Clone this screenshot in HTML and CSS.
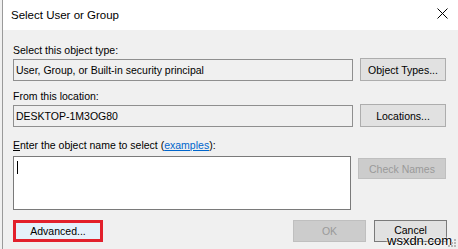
FILE: index.html
```html
<!DOCTYPE html>
<html>
<head>
<meta charset="utf-8">
<link rel="stylesheet" href="styles.css">
</head>
<body>
<div class="window">
  <div class="titlebar">
    <span class="title">Select User or Group</span>
    <svg class="close" width="11" height="11" viewBox="0 0 11 11"><path d="M0.5 0.5 L10.5 10.5 M10.5 0.5 L0.5 10.5" stroke="#000" stroke-width="1" fill="none"/></svg>
  </div>
  <div class="content">
    <div class="label l1">Select this object type:</div>
    <div class="row">
      <div class="field">User, Group, or Built-in security principal</div>
      <div class="btn">Object Types...</div>
    </div>
    <div class="label l2">From this location:</div>
    <div class="row">
      <div class="field">DESKTOP-1M3OG80</div>
      <div class="btn">Locations...</div>
    </div>
    <div class="label l3"><u>E</u>nter the object name to select (<a class="link">examples</a>):</div>
    <div class="row top">
      <div class="textarea"><span class="caret"></span></div>
      <div class="btn disabled check">Check Names</div>
    </div>
    <div class="bottom">
      <div class="btn advanced">Advanced...</div>
      <div class="spacer"></div>
      <div class="btn disabled ok">OK</div>
      <div class="btn cancel"><span class="cancel-text">Cancel</span></div>
    </div>
  </div>
  <div class="watermark">wsxdn.com</div>
  <svg class="grip" width="9" height="9" viewBox="0 0 9 9">
    <rect x="6" y="0" width="2" height="2" fill="#b8b8b8"/>
    <rect x="3" y="3" width="2" height="2" fill="#b8b8b8"/>
    <rect x="6" y="3" width="2" height="2" fill="#b8b8b8"/>
    <rect x="0" y="6" width="2" height="2" fill="#b8b8b8"/>
    <rect x="3" y="6" width="2" height="2" fill="#b8b8b8"/>
    <rect x="6" y="6" width="2" height="2" fill="#b8b8b8"/>
  </svg>
</div>
</body>
</html>
```
FILE: styles.css
```css
* { box-sizing: border-box; }
html, body {
  margin: 0;
  padding: 0;
  width: 458px;
  height: 249px;
  overflow: hidden;
  background: #f0f0f0;
  font-family: "Liberation Sans", Arial, sans-serif;
  font-size: 10.5px;
  color: #000;
}
.window {
  position: relative;
  margin-left: 2px;
  width: 456px;
  height: 249px;
  border-left: 1px solid #9a9a9a;
  background: #f0f0f0;
}
.titlebar {
  height: 30px;
  background: #fff;
  display: flex;
  align-items: center;
  justify-content: space-between;
  padding-left: 8px;
  padding-right: 10px;
}
.title {
  font-size: 11.5px;
  margin-top: -1px;
}
.close {
  display: block;
  margin-top: -4px;
}
.content {
  padding: 13px 12px 0 10px;
}
.label {
  height: 14px;
  line-height: 14px;
  white-space: nowrap;
}
.l1 { margin-bottom: 1px; }
.l2 { margin-top: 8px; margin-bottom: 1px; }
.l3 { margin-top: 11px; margin-bottom: 4px; }
.link {
  color: #0066cc;
  text-decoration: underline;
}
.row {
  display: flex;
  align-items: center;
  gap: 7px;
}
.row.top { align-items: flex-start; }
.field {
  flex: 1;
  height: 22px;
  line-height: 20px;
  border: 1px solid #8f8f8f;
  background: #f0f0f0;
  padding-left: 2px;
  white-space: nowrap;
  overflow: hidden;
}
.textarea {
  flex: 1;
  height: 54px;
  border: 1px solid #7a7a7a;
  background: #fff;
  padding: 4px 0 0 3px;
}
.caret {
  display: block;
  width: 1px;
  height: 13px;
  background: #000;
}
.btn {
  width: 86px;
  height: 23px;
  border: 1px solid #adadad;
  background: #e1e1e1;
  display: flex;
  align-items: center;
  justify-content: center;
  white-space: nowrap;
}
.btn.disabled {
  background: #cccccc;
  border-color: #bfbfbf;
  color: #9a9a9a;
}
.check {
  margin-top: 2px;
  height: 21px;
  width: 88px;
}
.bottom {
  display: flex;
  align-items: center;
  margin-top: 10px;
  height: 22px;
}
.spacer { flex: 1; }
.advanced {
  width: 90px;
  height: 22px;
  border: 3px solid #e2202c;
  background: #e5f1fb;
}
.ok {
  width: 73px;
  height: 22px;
  margin-right: 8px;
}
.cancel {
  width: 73px;
  height: 22px;
  border-color: #7a7a7a;
  margin-right: -1px;
}
.cancel-text {
  margin-top: -3px;
}
.watermark {
  position: absolute;
  left: 384px;
  top: 234px;
  font-family: "Liberation Sans", Arial, sans-serif;
  font-size: 13px;
  line-height: 14px;
  color: #000;
  text-shadow: 0 0 2px #fff, 0 0 2px #fff;
}
.grip {
  position: absolute;
  right: 1px;
  bottom: 1px;
}
```
